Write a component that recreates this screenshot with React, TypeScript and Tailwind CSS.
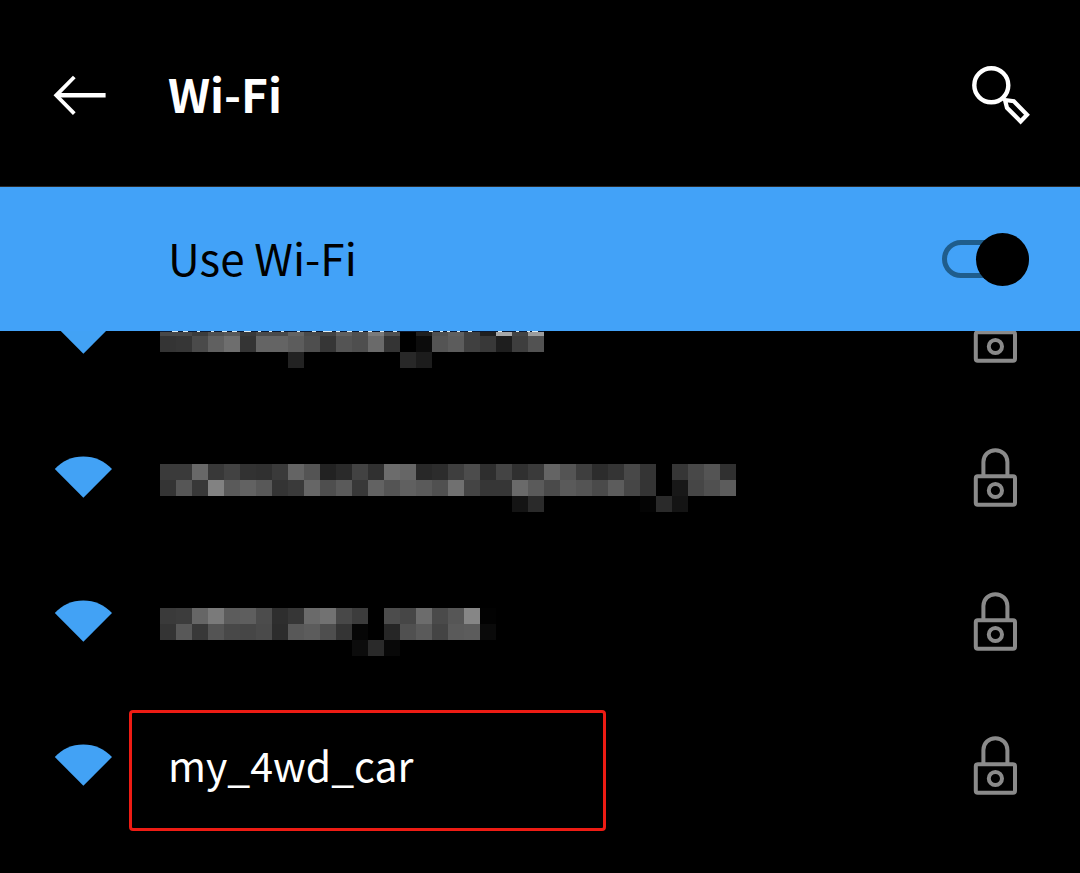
import { useState } from 'react';

type MosaicData = {
  rows: string[];
  width: number;
  flecks?: [number, number][];
};

type Network = {
  id: string;
  name?: string;
  mosaic?: MosaicData;
  highlighted?: boolean;
};

const CELL = 16;

// Each mosaic row is a list of grey levels in hex; ".." leaves a cell empty.
const networks: Network[] = [
  {
    id: 'a',
    mosaic: {
      width: 24,
      rows: [
        '48 48 3c 50 58 3a 4a 4a 64 4a 44 60 50 7a 50 .. 20 50 60 40 20 a8 44 9c',
        '34 36 4a 60 6e 34 64 64 5c 4e 36 54 4e 6a 34 .. 0c 54 5c 40 38 1e 3e 52',
        '.. .. .. .. .. .. .. .. 22 .. .. .. .. .. .. 28 1c',
      ],
      flecks: [
        [12, 6], [23, 5], [37, 3], [51, 3], [62, 5], [72, 5], [84, 7], [98, 3],
        [109, 3], [121, 3], [137, 3], [152, 4], [163, 9], [176, 4], [187, 5],
        [199, 4], [208, 4], [220, 4], [233, 4], [269, 4], [280, 3], [287, 3],
        [297, 3], [308, 4], [338, 4], [356, 3], [367, 3], [372, 6],
      ],
    },
  },
  {
    id: 'b',
    mosaic: {
      width: 36,
      rows: [
        '3a 3a 68 38 42 32 30 3a 64 54 22 2a 42 30 6c 66 28 2c 3e 4c 2e 44 30 3a 64 54 3e 2c 34 48 34 .. 36 48 54 30',
        '34 56 38 82 5a 62 58 34 3a 66 4e 5a 38 62 54 60 5a 50 70 44 36 36 6a 5a 4a 5a 54 4a 5c 46 34 .. 18 46 50 5c',
        '.. .. .. .. .. .. .. .. .. .. .. .. .. .. .. .. .. .. .. .. .. .. 14 2a .. .. .. .. .. .. 04 2a 14',
      ],
    },
  },
  {
    id: 'c',
    mosaic: {
      width: 21,
      rows: [
        '3a 3c 66 7a 5c 5e 4c 2e 36 6a 72 48 3c .. 4c 46 6c 4a 56 86 02',
        '34 58 38 54 48 46 4a 2c 58 5c 4e 34 06 .. 26 50 5a 44 5a 5c 0a',
        '.. .. .. .. .. .. .. .. .. .. .. .. 0c 2a 08',
      ],
    },
  },
  { id: 'd', name: 'my_4wd_car', highlighted: true },
];

function Mosaic({ data }: { data: MosaicData }) {
  const w = data.width * CELL;
  return (
    <svg
      role="img"
      aria-label="Hidden network name"
      width={w}
      height={CELL * 3}
      viewBox={`0 0 ${w} ${CELL * 3}`}
      shapeRendering="crispEdges"
      className="shrink-0"
    >
      {data.rows.map((row, y) =>
        row.split(' ').map((level, x) =>
          level === '..' ? null : (
            <rect
              key={`${x}-${y}`}
              x={x * CELL}
              y={y * CELL}
              width={CELL}
              height={CELL}
              fill={`#${level}${level}${level}`}
            />
          ),
        ),
      )}
      {data.flecks && <rect x="0" y="11" width={w} height="1" fill="#0b1a33" />}
      {data.flecks?.map(([x, width]) => (
        <rect key={x} x={x} y="11" width={width} height="1" fill="#dcebf2" />
      ))}
    </svg>
  );
}

function BackIcon() {
  return (
    <svg width="54" height="42" viewBox="0 0 54 42" fill="none" stroke="#fff" strokeWidth="4.4" aria-hidden="true">
      <path d="M3 21.3H52.6" />
      <path d="M21.3 3L3.2 21.3L21.3 39.6" strokeWidth="3.8" />
    </svg>
  );
}

function SearchIcon() {
  return (
    <svg width="60" height="60" viewBox="0 0 60 60" fill="none" stroke="#fff" strokeWidth="4.4" aria-hidden="true">
      <circle cx="21.3" cy="20.3" r="17" />
      <path d="M35 35L43.8 36.2L57 49.8L50.6 56.4L37 42.8Z" strokeWidth="4.2" />
    </svg>
  );
}

function SignalIcon() {
  return (
    <svg width="58" height="42" viewBox="0 0 58 42" className="shrink-0" aria-hidden="true">
      <path d="M0.8 13C8 5 18 0.5 29.3 0.5S50.5 5 58 13L29.4 41.8Z" fill="#42a2f5" />
    </svg>
  );
}

function LockIcon() {
  return (
    <svg
      width="46"
      height="60"
      viewBox="0 0 46 60"
      fill="none"
      stroke="#8a8a8a"
      strokeWidth="4"
      className="shrink-0"
      aria-hidden="true"
    >
      <rect x="2.8" y="29.3" width="39.2" height="28.5" rx="2" />
      <path d="M10.4 29V15C10.4 8 15.8 3.2 22.4 3.2S34.4 8 34.4 15V29" />
      <circle cx="22.4" cy="43.5" r="6.6" />
    </svg>
  );
}

function NetworkRow({ network }: { network: Network }) {
  return (
    <li className="relative h-36">
      <button type="button" className="flex h-full w-full items-center pr-[61px] pl-[54px] text-left">
        <SignalIcon />
        {network.mosaic ? (
          <span className="flex min-w-0 flex-1 overflow-hidden pt-[22px] pl-12">
            <Mosaic data={network.mosaic} />
          </span>
        ) : (
          <span className="min-w-0 flex-1 truncate pb-0.5 pl-14 text-[41px] leading-[64px] text-white">
            {network.name}
          </span>
        )}
        <LockIcon />
      </button>
      {network.highlighted && (
        <span className="pointer-events-none absolute top-[17px] left-[129px] h-[121px] w-[477px] rounded-[4px] border-3 border-[#ee1c14]" />
      )}
    </li>
  );
}

export default function App() {
  const [enabled, setEnabled] = useState(true);

  return (
    <main className="min-h-screen overflow-hidden bg-black font-['Noto_Sans_CJK_SC','Noto_Sans',sans-serif]">
      <header className="flex h-[187px] items-center border-b border-[#2a2a2a] pt-1 pr-[50px] pl-[53px]">
        <button type="button" aria-label="Back">
          <BackIcon />
        </button>
        <h1 className="flex-1 pb-1 pl-[61px] text-[46px] leading-[64px] font-bold text-white">Wi-Fi</h1>
        <button type="button" aria-label="Search">
          <SearchIcon />
        </button>
      </header>

      <label className="relative z-10 flex h-36 cursor-pointer items-center justify-between bg-[#42a2f8] pr-[51px] pl-[168px]">
        <span className="pb-1 text-[44px] leading-[64px] text-black">Use Wi-Fi</span>
        <span className="relative flex h-[53px] w-[87px] items-center">
          <input
            type="checkbox"
            role="switch"
            checked={enabled}
            onChange={(e) => setEnabled(e.target.checked)}
            className="peer h-[38px] w-full cursor-pointer appearance-none rounded-full border-5 border-[#1f5d8c]"
          />
          <span className="pointer-events-none absolute top-0 left-0 size-[53px] rounded-full bg-black peer-checked:right-0 peer-checked:left-auto" />
        </span>
      </label>

      <ul className="-mt-[70px]">
        {networks.map((network) => (
          <NetworkRow key={network.id} network={network} />
        ))}
      </ul>
    </main>
  );
}
